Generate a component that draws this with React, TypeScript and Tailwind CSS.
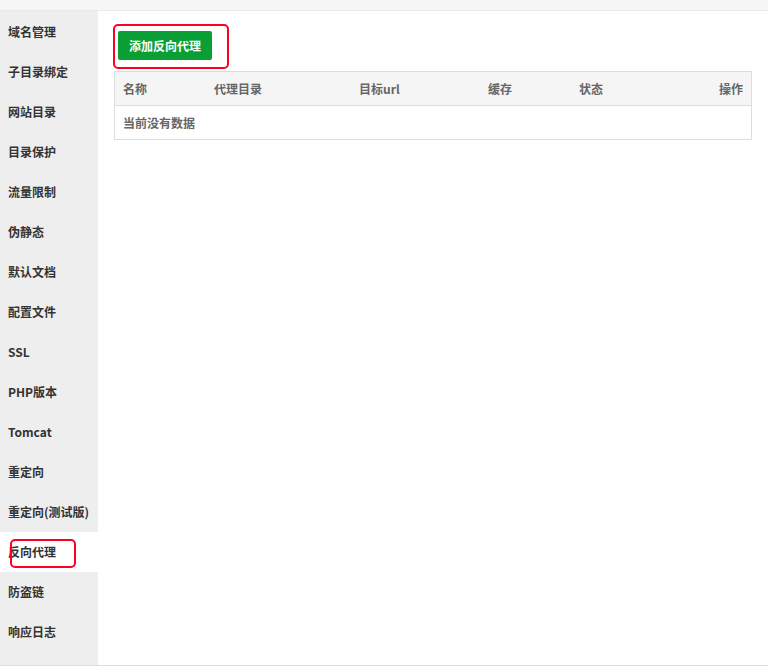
import React from 'react'

const menu = [
  '域名管理',
  '子目录绑定',
  '网站目录',
  '目录保护',
  '流量限制',
  '伪静态',
  '默认文档',
  '配置文件',
  'SSL',
  'PHP版本',
  'Tomcat',
  '重定向',
  '重定向(测试版)',
  '反向代理',
  '防盗链',
  '响应日志',
]

const active = '反向代理'

export default function App() {
  return (
    <div
      className="w-[768px] h-[672px] bg-white flex flex-col text-[12px]"
      style={{ fontFamily: '"Noto Sans CJK SC", "Noto Sans", sans-serif' }}
    >
      <div className="h-[11px] bg-[#f6f6f6] border-b border-[#e8e8e8]" />
      <div className="flex h-[655px] border-b border-[#dcdcdc]">
        <div className="w-[98px] bg-[#eeeeee] flex flex-col pt-px">
          {menu.map((m) => (
            <div
              key={m}
              className={
                'relative h-[40px] flex items-center pl-[8px] font-bold text-[#333] ' +
                (m === active ? 'bg-white' : '')
              }
            >
              {m}
              {m === active && (
                <div className="absolute left-[10px] top-[7px] w-[66px] h-[29px] border-2 border-[#ff0022] rounded-[5px]" />
              )}
            </div>
          ))}
        </div>
        <div className="flex-1 pl-[16px] pr-[16px] pt-[20px]">
          <div className="relative w-fit ml-[4px]">
            <button className="h-[29px] px-[11px] bg-[#0a9f35] text-white font-bold rounded-[2px]">
              添加反向代理
            </button>
            <div className="absolute -left-[5px] -top-[7px] w-[116px] h-[45px] border-2 border-[#ff0022] rounded-[5px]" />
          </div>
          <div className="mt-[11px] border border-[#dddddd] text-[#666] font-bold">
            <div className="grid grid-cols-[91px_145px_129px_91px_1fr_80px] h-[34px] items-center bg-[#f5f5f5] border-b border-[#dddddd] px-[8px]">
              <span>名称</span>
              <span>代理目录</span>
              <span>目标url</span>
              <span>缓存</span>
              <span>状态</span>
              <span className="text-right">操作</span>
            </div>
            <div className="h-[33px] flex items-center px-[8px]">当前没有数据</div>
          </div>
        </div>
      </div>
    </div>
  )
}
